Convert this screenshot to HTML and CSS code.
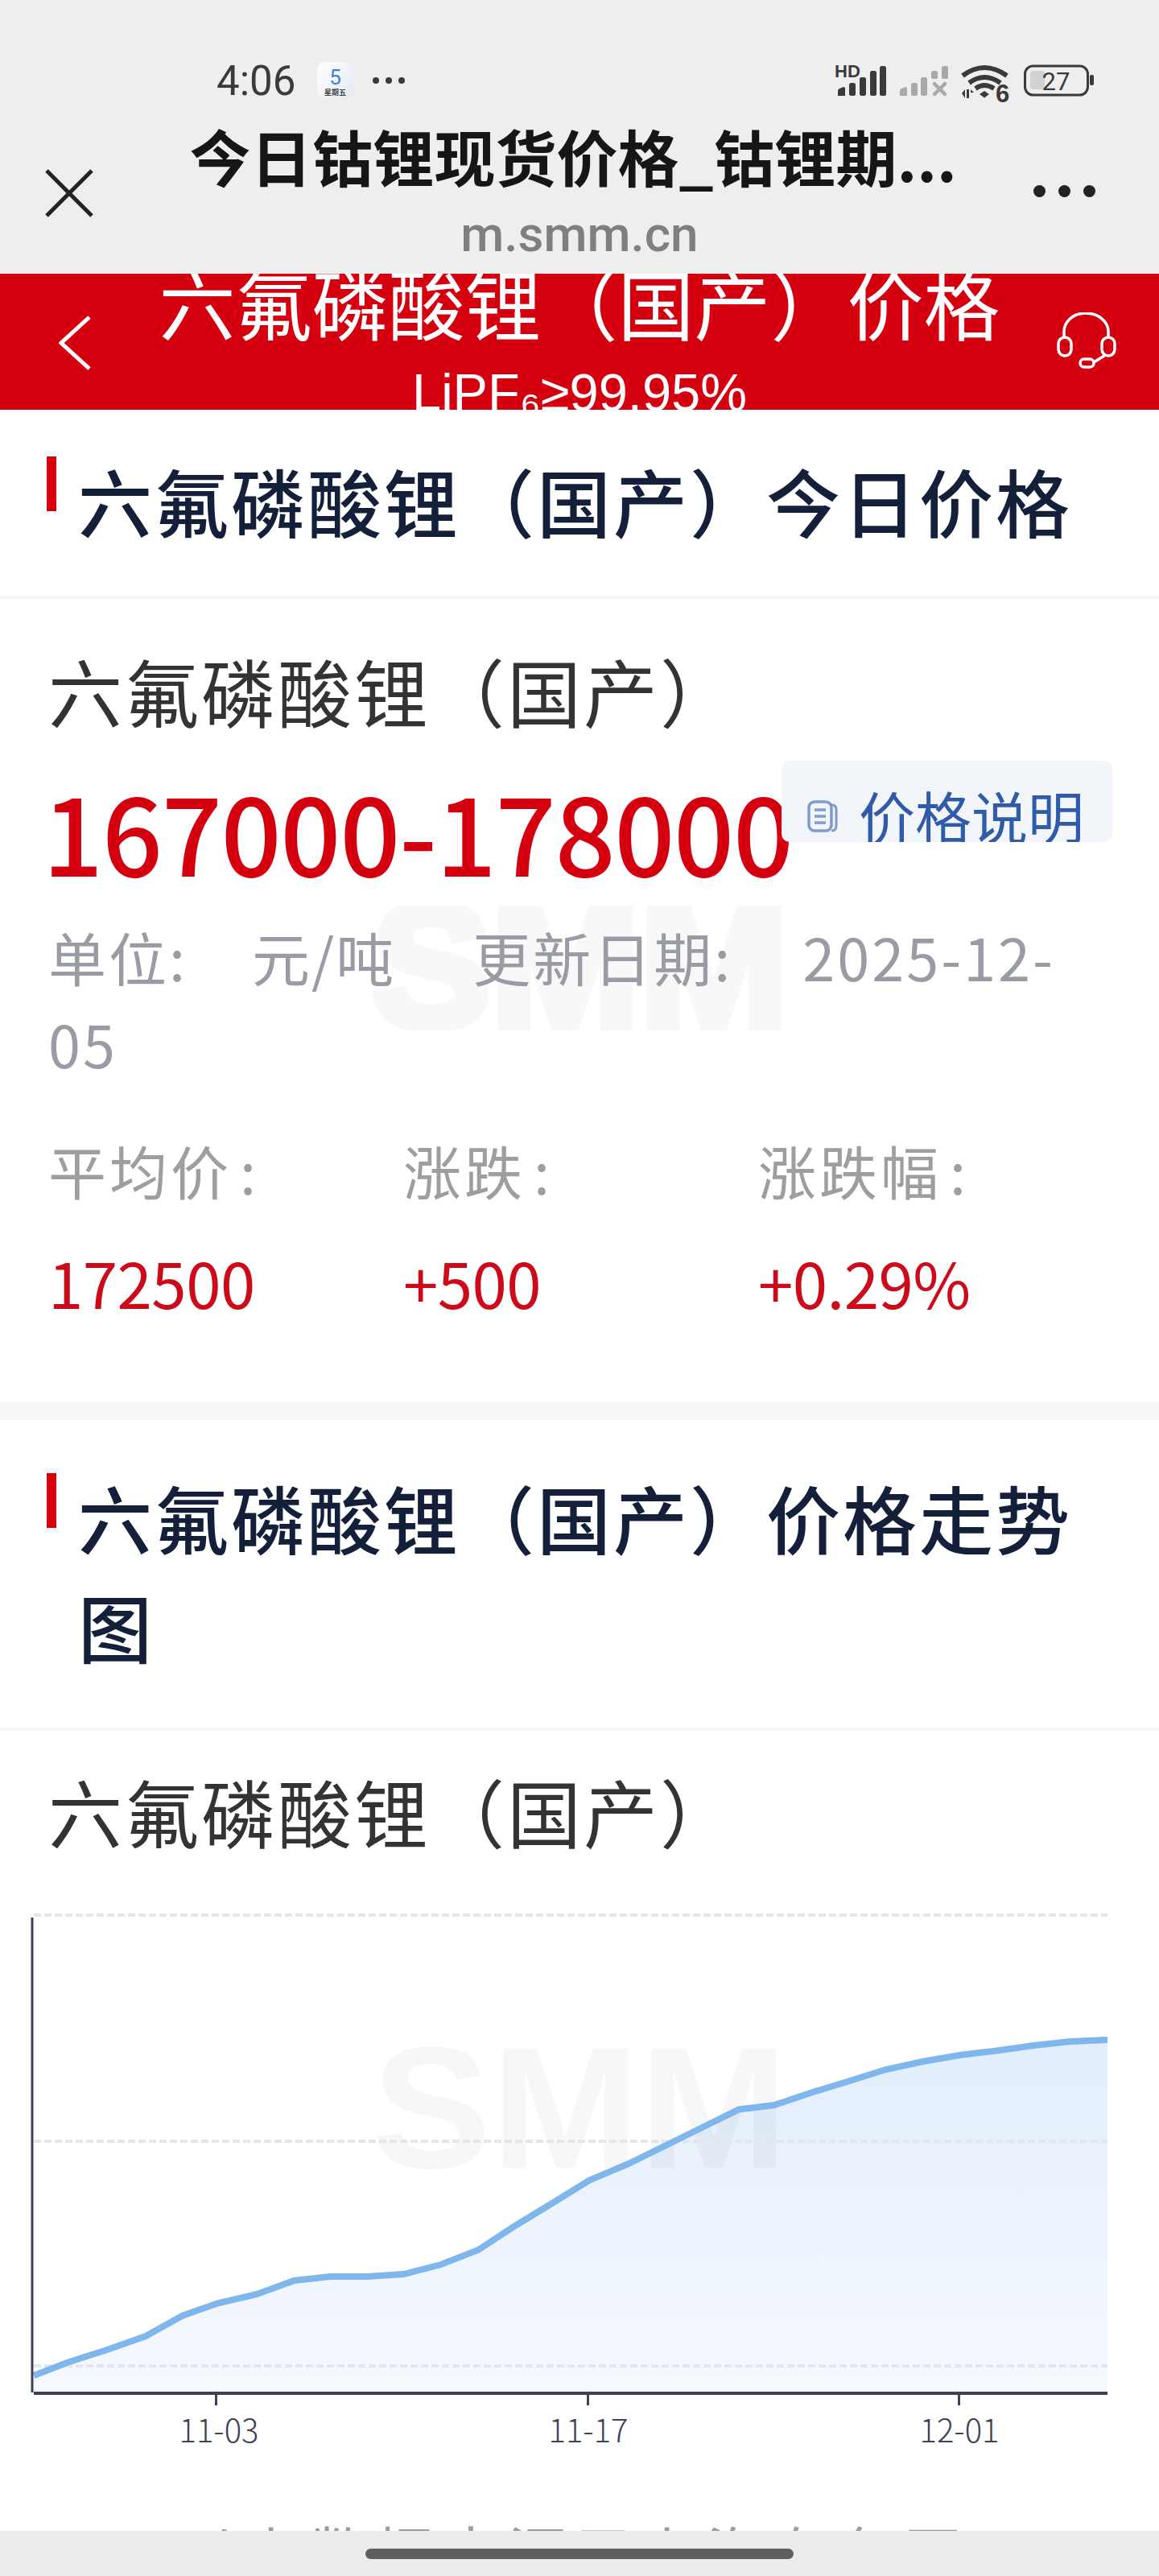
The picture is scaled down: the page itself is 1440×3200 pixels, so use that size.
FILE: index.html
```html
<!DOCTYPE html>
<html lang="zh-CN">
<head>
  <meta charset="UTF-8">
  <title>今日钴锂现货价格_钴锂期货价格</title>
  <link rel="stylesheet" href="styles.css">
</head>
<body>

<div class="browser">
  <div class="status">
    <div class="status-left">
      <span class="time">4:06</span>
      <span class="cal"><b>5</b><i>星期五</i></span>
      <span class="status-dots"><u></u><u></u><u></u></span>
    </div>
    <svg class="status-right" width="335" height="60" viewBox="1030 70 335 60">
      <text x="1037" y="96" class="hd">HD</text>
      <g fill="#3a3a3a">
        <path d="M1041 119v-6q0-2 2-3l5-2q2 0 2 2v9z"/>
        <rect x="1055" y="103" width="8" height="16" rx="2.5"/>
        <rect x="1068" y="96" width="8" height="23" rx="2.5"/>
        <rect x="1081" y="88" width="8" height="31" rx="2.5"/>
        <rect x="1093" y="82" width="8" height="37" rx="2.5"/>
      </g>
      <g fill="#a9a9a9">
        <path d="M1118 119v-6q0-2 2-3l5-2q2 0 2 2v9z"/>
        <rect x="1132" y="103" width="8" height="16" rx="2.5"/>
        <rect x="1144" y="96" width="8" height="23" rx="2.5"/>
        <rect x="1157" y="88" width="8" height="10" rx="2.5"/>
        <rect x="1170" y="82" width="8" height="16" rx="2.5"/>
      </g>
      <path d="M1161 104l13 13M1174 104l-13 13" stroke="#a9a9a9" stroke-width="4.5" stroke-linecap="round" fill="none"/>
      <g fill="none" stroke="#3a3a3a" stroke-width="6">
        <path d="M1196 94q27-20 55 0"/>
        <path d="M1204 103q19-14 39 0"/>
        <path d="M1212 110q11-8 23 0"/>
      </g>
      <path d="M1217 117l6-4 6 4-6 4.500z" fill="#3a3a3a"/>
      <path d="M1195 116l4-5v11zM1201 111h3v11h-3zM1206 111l4 4h-4z" fill="#3a3a3a"/>
      <text x="1237" y="127" class="wifi-six">6</text>
      <rect x="1273.500" y="82" width="78" height="36" rx="10" fill="none" stroke="#3a3a3a" stroke-width="3"/>
      <rect x="1280" y="88" width="18" height="23" rx="4" fill="#d2d2d2"/>
      <text x="1312" y="112" class="batt">27</text>
      <rect x="1354" y="93" width="5" height="13" rx="2" fill="#3a3a3a"/>
    </svg>
  </div>
  <div class="tabbar">
    <svg class="close" width="60" height="60" viewBox="0 0 60 60">
      <path d="M2 2l56 56M58 2L2 58" stroke="#222" stroke-width="5" fill="none"/>
    </svg>
    <div class="tab-text">
      <div class="tab-title">今日钴锂现货价格_钴锂期...</div>
      <div class="tab-url">m.smm.cn</div>
    </div>
    <span class="more"><u></u><u></u><u></u></span>
  </div>
</div>

<div class="nav">
  <svg class="back" width="40" height="68" viewBox="0 0 40 68">
    <path d="M38 2L3 34l35 32" stroke="#fff" stroke-width="5" fill="none"/>
  </svg>
  <div class="nav-text">
    <div class="nav-title">六氟磷酸锂（国产）价格</div>
    <div class="nav-sub">LiPF₆≥99.95%</div>
  </div>
  <svg class="headset" width="74" height="70" viewBox="34 28 74 70">
    <g fill="none" stroke="#fff" stroke-width="3.500">
      <path d="M43 58v-6c0-13 12-23 27-23s28 10 28 23v6"/>
      <rect x="36" y="59" width="16" height="23" rx="8"/>
      <rect x="90" y="59" width="16" height="23" rx="8"/>
      <rect x="63" y="86" width="17" height="10" rx="5"/>
      <path d="M80 90l13-8"/>
    </g>
  </svg>
</div>

<div class="sec-head sec-head-first">
  <span class="mark"></span>
  <h2>六氟磷酸锂（国产）今日价格</h2>
</div>

<div class="price-card">
  <svg class="watermark" width="517" height="155" viewBox="0 0 517 155">
    <text x="0" y="150" textLength="517" lengthAdjust="spacingAndGlyphs">SMM</text>
  </svg>
  <div class="name">六氟磷酸锂（国产）</div>
  <div class="price">167000-178000</div>
  <div class="explain">
    <svg width="38" height="40" viewBox="0 0 38 40">
      <path d="M28 6h3q5 0 5 6v20q0 6-6 6" fill="none" stroke="#7f9bcb" stroke-width="3"/>
      <rect x="2" y="2" width="28" height="36" rx="7" fill="none" stroke="#7f9bcb" stroke-width="3.500"/>
      <path d="M9 12h14M9 20h14M9 28h14" stroke="#7f9bcb" stroke-width="3.500"/>
    </svg>
    <span>价格说明</span>
  </div>
  <div class="meta">
    <span class="meta-key">单位<em>:</em></span><span class="meta-val">元/吨</span><span class="meta-key">更新日期<em>:</em></span><span class="meta-date">2025-12-<wbr>05</span>
  </div>
  <div class="stats">
    <div>
      <div class="stat-label">平均价<em>:</em></div>
      <div class="stat-value">172500</div>
    </div>
    <div>
      <div class="stat-label">涨跌<em>:</em></div>
      <div class="stat-value">+500</div>
    </div>
    <div>
      <div class="stat-label">涨跌幅<em>:</em></div>
      <div class="stat-value">+0.29%</div>
    </div>
  </div>
</div>

<div class="band"></div>

<div class="sec-head">
  <span class="mark"></span>
  <h2>六氟磷酸锂（国产）价格走势图</h2>
</div>

<div class="chart-card">
  <div class="name">六氟磷酸锂（国产）</div>
  <svg class="chart" width="1440" height="700" viewBox="0 2370 1440 700">
    <defs>
      <linearGradient id="areaFill" x1="0" y1="0" x2="0" y2="1">
        <stop offset="0" stop-color="#e2eefc"/>
        <stop offset="1" stop-color="#f6f9fe"/>
      </linearGradient>
    </defs>
    <path fill="url(#areaFill)" d="M42 2975V2953L84.500 2936.500 133 2921 181 2904 227 2878.500 271 2863 319 2852 365.500 2835 410.500 2830 456 2830 502 2827 548 2815 594 2797 640 2767 686 2739 732 2710.500 780.500 2690 826.500 2667.500 872 2645 918 2622.500 962 2617 1008 2601.500 1054 2587.500 1100 2573 1146 2563 1192 2555 1238 2549.500 1284 2543 1330 2538 1376 2536V2975Z"/>
    <text class="chart-mark" x="462" y="2695" textLength="517" lengthAdjust="spacingAndGlyphs">SMM</text>
    <g stroke="#e4e6ee" stroke-width="4" stroke-dasharray="9 4" fill="none">
      <path d="M42 2381H1376"/>
      <path d="M42 2662H1376"/>
      <path d="M42 2941H1376"/>
    </g>
    <path fill="none" stroke="#7fb6ec" stroke-width="8" d="M42 2953L84.500 2936.500 133 2921 181 2904 227 2878.500 271 2863 319 2852 365.500 2835 410.500 2830 456 2830 502 2827 548 2815 594 2797 640 2767 686 2739 732 2710.500 780.500 2690 826.500 2667.500 872 2645 918 2622.500 962 2617 1008 2601.500 1054 2587.500 1100 2573 1146 2563 1192 2555 1238 2549.500 1284 2543 1330 2538 1376 2536"/>
    <g stroke="#3d4255" fill="none">
      <path d="M40 2384V2974" stroke-width="3"/>
      <path d="M42 2975H1376" stroke-width="4"/>
      <path d="M268.500 2975V2990M730.500 2975V2990M1191.500 2975V2990" stroke-width="3"/>
    </g>
    <g class="ticks">
      <text x="272" y="3036">11-03</text>
      <text x="731" y="3036">11-17</text>
      <text x="1192" y="3036">12-01</text>
    </g>
  </svg>
  <div class="note">以上数据来源于上海有色网</div>
</div>

<div class="gesture"><span></span></div>

</body>
</html>
```
FILE: styles.css
```css
body {
  font-family: "Noto Sans CJK SC", "Liberation Sans", sans-serif;
  margin: 0;
  padding: 0;
  width: 1440px;
  height: 3200px;
  overflow: hidden;
  position: relative;
  background-color: #fff;
}
em, i {
  font-style: normal;
}

/* browser chrome */
.browser {
  height: 340px;
  overflow: hidden;
  background-color: #eee;
}
.status {
  height: 94px;
  padding: 53px 75px 0 269px;
  display: flex;
  justify-content: space-between;
  align-items: center;
}
.status-left {
  display: flex;
  align-items: center;
}
.time {
  font-family: Roboto, sans-serif;
  font-size: 51px;
  color: #3a3a3a;
  width: 125px;
}
.cal {
  width: 45px;
  height: 46px;
  border-radius: 11px;
  background: linear-gradient(135deg, #fff, #e2eaf3);
  display: flex;
  flex-direction: column;
  align-items: center;
  line-height: 1;
}
.cal b {
  font-family: Roboto, sans-serif;
  font-weight: 400;
  font-size: 26px;
  color: #3f7fd6;
  margin-top: 6px;
}
.cal i {
  font-size: 9px;
  font-weight: 700;
  color: #444;
  margin-top: 1px;
}
.status-dots {
  display: flex;
  gap: 8px;
  margin-left: 24px;
}
.status-dots u {
  width: 8px;
  height: 8px;
  border-radius: 50%;
  background-color: #3a3a3a;
}
.hd {
  font-family: "Liberation Sans", sans-serif;
  font-weight: 700;
  font-size: 22px;
  fill: #3a3a3a;
}
.wifi-six {
  font-family: "Liberation Sans", sans-serif;
  font-weight: 700;
  font-size: 31px;
  fill: #3a3a3a;
}
.batt {
  font-family: Roboto, sans-serif;
  font-size: 31px;
  fill: #3a3a3a;
  text-anchor: middle;
}
.tabbar {
  display: flex;
  align-items: flex-start;
  padding-left: 56px;
  position: relative;
}
.close {
  margin-top: 63px;
}
.tab-text {
  position: absolute;
  left: 0;
  right: 0;
  top: -4px;
  text-align: center;
}
.tab-title {
  font-size: 76px;
  line-height: 100px;
  font-weight: 700;
  color: #161616;
  padding-right: 16px;
}
.tab-url {
  font-family: Roboto, sans-serif;
  font-size: 62px;
  font-weight: 500;
  line-height: 96px;
  color: #7f7f7f;
}
.more {
  position: absolute;
  left: 1284px;
  top: 83px;
  display: flex;
  gap: 16px;
}
.more u {
  width: 15px;
  height: 15px;
  border-radius: 50%;
  background-color: #222;
}

/* red title bar */
.nav {
  height: 169px;
  overflow: hidden;
  background-color: #d5000f;
  color: #fff;
  display: grid;
  grid-template-columns: 190px 1fr 190px;
  align-items: start;
}
.back {
  margin: 52px 0 0 73px;
}
.headset {
  margin-top: 48px;
  justify-self: end;
  margin-right: 53px;
}
.nav-text {
  text-align: center;
  margin-top: -15px;
}
.nav-title {
  font-size: 95px;
  line-height: 100px;
  white-space: nowrap;
}
.nav-sub {
  font-family: "Liberation Sans", "Noto Sans CJK SC", sans-serif;
  font-size: 65px;
  line-height: 100px;
  margin-top: 13px;
}

/* section headers */
.sec-head {
  display: flex;
  align-items: flex-start;
  gap: 27px;
  padding: 52px 60px 60px 58px;
  border-bottom: 4px solid #f5f6fa;
  margin-bottom: -4px;
}
.sec-head-first {
  padding-top: 44px;
  padding-bottom: 52px;
}
.mark {
  flex: none;
  width: 12px;
  height: 68px;
  margin-top: 14px;
  background-color: #d5000f;
}
.sec-head h2 {
  margin: 0;
  font-size: 92px;
  line-height: 135px;
  font-weight: 500;
  letter-spacing: 3px;
  color: #14203a;
}

/* price block */
.price-card {
  position: relative;
  height: 1002px;
  padding: 49px 0 0 60px;
  box-sizing: border-box;
}
.watermark {
  position: absolute;
  left: 462px;
  top: 385px;
}
.watermark text {
  font-family: "Liberation Sans", sans-serif;
  font-weight: 700;
  font-size: 216px;
  fill: #f8f8f8;
  stroke: #f8f8f8;
  stroke-width: 12px;
}
.name {
  position: relative;
  font-size: 92px;
  line-height: 135px;
  letter-spacing: 3px;
  color: #333;
}
.price {
  position: relative;
  font-size: 132px;
  line-height: 150px;
  margin: 33px 0 0 -7px;
  letter-spacing: -1.4px;
  font-weight: 500;
  color: #d5000f;
  white-space: nowrap;
}
.explain {
  position: absolute;
  left: 971px;
  top: 205px;
  width: 411px;
  height: 101px;
  box-sizing: border-box;
  overflow: hidden;
  border-radius: 10px;
  background-color: #f2f6fb;
  display: flex;
  align-items: flex-start;
  color: #2f5ba8;
  font-size: 70px;
  padding: 0 0 0 32px;
}
.explain svg {
  margin-top: 49px;
  flex: none;
}
.explain span {
  line-height: 100px;
  margin-left: 26px;
  margin-top: 18px;
  white-space: nowrap;
}
.meta {
  position: relative;
  font-size: 72px;
  line-height: 108px;
  margin-top: 27px;
  color: #9a9ca5;
  width: 1290px;
}
.stats em {
  margin-left: 10px;
}
.meta-key {
  letter-spacing: 3px;
}
.meta-val {
  margin: 0 96px 0 80px;
  letter-spacing: 2px;
}
.meta-date {
  margin-left: 87px;
  letter-spacing: 3px;
}
.stats {
  position: relative;
  display: grid;
  grid-template-columns: 441px 441px 441px;
  margin-top: 53px;
}
.stat-label {
  font-size: 72px;
  line-height: 100px;
  letter-spacing: 4px;
  color: #9e9e9e;
}
.stat-value {
  font-size: 78px;
  line-height: 100px;
  margin-top: 39px;
  letter-spacing: -0.5px;
  color: #cd0a1a;
}
.band {
  height: 22px;
  background-color: #f7f7f8;
}

/* chart block */
.chart-card {
  padding-top: 35px;
}
.chart-card .name {
  padding-left: 60px;
}
.chart {
  display: block;
  margin-top: 52px;
}
.chart-mark {
  font-family: "Liberation Sans", sans-serif;
  font-weight: 700;
  font-size: 216px;
  fill: #000;
  fill-opacity: 0.03;
}
.ticks text {
  font-size: 40px;
  font-weight: 300;
  fill: #3d4255;
  text-anchor: middle;
}
.note {
  font-size: 72px;
  line-height: 100px;
  margin-top: 50px;
  padding-right: 14px;
  letter-spacing: 10px;
  text-align: center;
  color: #9a9ca5;
}

/* bottom gesture bar, sits over the page */
.gesture {
  position: absolute;
  left: 0;
  right: 0;
  bottom: 0;
  height: 56px;
  background-color: #ececec;
  display: flex;
  justify-content: center;
}
.gesture span {
  width: 532px;
  height: 13px;
  margin-top: 22px;
  border-radius: 7px;
  background-color: #5f5f5f;
}
```
